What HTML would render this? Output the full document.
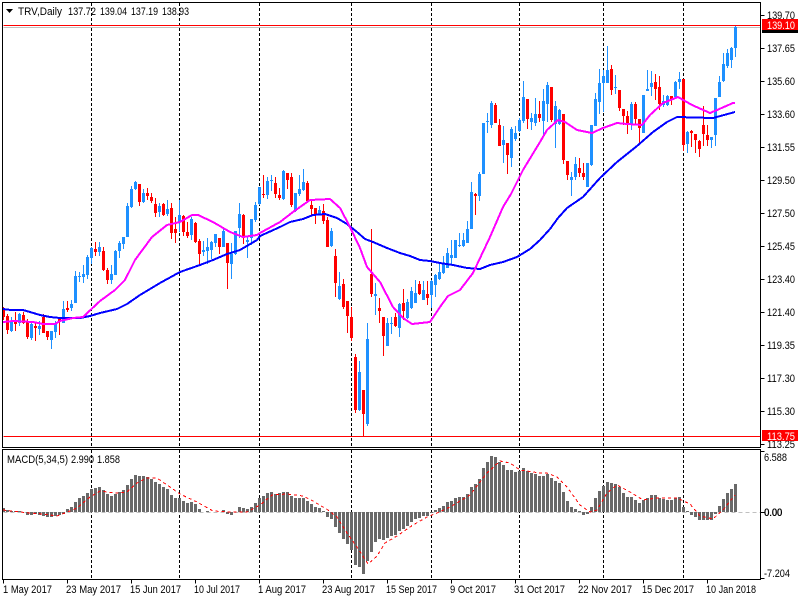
<!DOCTYPE html>
<html>
<head>
<meta charset="utf-8">
<title>TRV,Daily</title>
<style>
html,body{margin:0;padding:0;background:#fff;width:800px;height:600px;overflow:hidden}
svg{display:block}
text{font-family:"Liberation Sans",Arial,sans-serif;font-size:11px;fill:#000}
</style>
</head>
<body>
<svg width="800" height="600" viewBox="0 0 800 600" xmlns="http://www.w3.org/2000/svg">
<rect width="800" height="600" fill="#fff"/>

<g transform="translate(.5,0)" shape-rendering="crispEdges" fill="none">
<!-- vertical period separators -->
<path stroke="#000" stroke-dasharray="3,2" d="M91 3V447M179 3V447M259 3V447M351 3V447M431 3V447M519 3V447M603 3V447M683 3V447M91 450V579M179 450V579M259 450V579M351 450V579M431 450V579M519 450V579M603 450V579M683 450V579"/>
<!-- price lines -->
<path stroke="#c0c0c0" d="M3 27.5H760"/>
<path stroke="#ff0000" d="M3 25.5H760M3 436.5H760"/>

<!-- blue wicks -->
<path stroke="#1e90ff" stroke-width="1" d="M11 317V332M19 313V326M31 322V340M39 321V335M51 331V349M55 321V338M63 301V323M71 300V311M75 271V303M79 272V282M83 265V283M87 255V279M91 247V264M99 242V256M111 265V284M115 250V275M119 241V258M123 237V249M127 203V237M131 186V208M135 181V190M143 189V203M159 203V217M167 200V216M179 200V232M191 217V240M203 241V256M207 238V264M211 241V259M215 234V247M223 228V247M231 243V279M235 231V255M239 203V238M247 236V258M251 219V245M255 202V222M259 187V205M267 177V199M271 175V191M283 170V200M295 193V212M299 175V196M303 169V191M319 206V215M331 228V247M339 272V300M359 361V411M367 323V426M375 283V315M387 318V346M391 317V334M399 303V337M407 299V319M411 287V309M415 280V303M423 281V300M431 280V308M435 274V297M439 263V280M443 256V274M447 248V268M451 240V265M455 240V258M459 233V247M463 233V247M467 221V243M471 182V229M479 172V201M483 123V174M487 113V133M491 101V128M503 126V163M511 127V167M515 126V141M519 118V132M523 81V123M531 113V130M535 98V126M543 89V135M547 82V122M555 101V148M559 109V125M571 172V196M575 157V180M587 163V187M591 125V166M595 93V126M599 69V114M603 70V112M607 46V83M615 75V94M631 102V130M643 95V133M647 70V91M651 71V96M663 95V107M667 95V106M675 81V97M679 72V89M687 131V153M711 137V148M715 98V146M719 76V97M723 53V82M727 49V68M731 47V68M735 26V57"/>
<!-- blue bodies -->
<path stroke="#1e90ff" stroke-width="3" d="M11 322V331M19 314V323M31 324V338M39 326V329M51 331V340M55 324V332M63 309V323M71 304V308M75 276V303M79 276V277M83 274V277M87 257V275M91 248V258M99 247V252M111 274V280M115 251V275M119 243V251M123 237V244M127 206V237M131 189V207M135 182V189M143 193V202M159 206V212M167 209V214M179 215V222M191 219V235M203 250V252M207 247V251M211 242V250M215 234V243M223 231V247M231 254V264M235 231V254M239 214V228M247 240V242M251 219V238M255 205V220M259 187V204M267 181V195M271 180V181M283 171V199M295 193V211M299 189V194M303 182V190M319 210V214M331 231V246M339 286V299M359 372V410M367 339V424M375 294V296M387 323V346M391 323V324M399 304V328M407 302V318M411 291V308M415 293V303M423 290V300M431 281V295M435 275V285M439 272V279M443 264V273M447 253V268M451 255V258M455 240V258M459 245V246M463 240V246M467 229V243M471 192V229M479 174V196M483 123V174M487 121V122M491 103V125M503 140V145M511 129V158M515 133V139M519 120V131M523 97V121M531 118V122M535 114V123M543 101V121M547 85V104M555 106V124M559 110V124M571 177V180M575 164V177M587 163V187M591 125V165M595 99V126M599 83V102M603 76V83M607 70V83M615 87V88M631 104V125M643 95V133M647 89V91M651 83V87M663 101V105M667 96V105M675 82V97M679 79V82M687 132V144M711 137V140M715 98V135M719 82V97M723 64V81M727 53V66M731 48V60M735 27V48"/>
<!-- red wicks -->
<path stroke="#ff0000" stroke-width="1" d="M3 307V320M7 314V334M15 312V331M23 312V324M27 319V339M35 323V341M43 314V333M47 331V340M59 317V335M67 301V312M95 242V256M103 247V271M107 268V284M139 184V206M147 188V200M151 193V203M155 198V217M163 203V216M171 203V239M175 217V243M183 215V236M187 222V238M195 222V243M199 239V265M219 238V254M227 243V289M243 214V244M263 175V198M275 177V198M279 188V200M287 173V189M291 173V207M307 181V202M311 199V215M315 208V224M323 204V224M327 217V247M335 249V297M343 279V309M347 301V333M351 307V341M355 354V413M363 390V436M371 229V297M379 298V323M383 317V356M395 313V327M403 289V320M419 281V295M427 281V305M475 193V215M495 103V123M499 119V146M507 143V174M527 99V129M539 101V122M551 87V122M563 114V164M567 161V180M579 158V177M583 163V180M611 65V95M619 90V111M623 109V125M627 111V134M635 102V124M639 119V145M655 74V100M659 76V110M671 96V105M683 79V151M691 130V147M695 134V153M699 140V157M703 106V146M707 125V146"/>
<!-- red bodies -->
<path stroke="#ff0000" stroke-width="3" d="M3 309V317M7 316V330M15 321V324M23 315V323M27 321V337M35 326V328M43 317V333M47 331V337M59 319V322M67 308V310M95 249V252M103 251V270M107 270V280M139 184V202M147 193V196M151 197V201M155 204V213M163 204V215M171 208V233M175 229V233M183 216V232M187 232V236M195 223V242M199 241V254M219 238V247M227 243V263M243 215V238M263 194V195M275 183V194M279 195V198M287 173V180M291 177V205M307 183V201M311 205V209M315 208V214M323 211V221M327 220V247M335 256V283M343 284V307M347 301V316M351 317V338M355 357V410M363 390V414M371 274V294M379 308V311M383 317V336M395 317V326M403 303V311M419 284V294M427 294V298M475 194V196M495 105V123M499 125V146M507 143V155M527 99V119M539 114V118M551 87V120M563 114V160M567 161V175M579 168V173M583 173V177M611 69V90M619 90V108M623 109V116M627 116V125M635 104V119M639 119V128M655 82V89M659 87V104M671 96V99M683 79V145M691 131V133M695 134V140M699 141V149M703 125V134M707 135V140"/>
</g>

<!-- moving averages -->
<polyline fill="none" stroke="#0000ff" stroke-width="2" shape-rendering="crispEdges" points="3,309 11,310 23,310 30,312 40,315 50,317 60,318 80,318 90,316 100,313 117,309 127,304 140,295 160,283 180,272 200,265 213,260 227,254 240,250 257,240 260,236 280,227 290,222 303,219 313,215 325,214 337,218 347,224 357,232 365,239 373,242 387,248 400,253 410,256 420,260 430,261 440,263 453,265 467,268 480,269 490,265 503,262 517,257 530,249 540,240 550,229 558,218 567,208 583,197 600,178 617,162 637,146 653,132 667,122 677,117 713,118 735,112"/>
<polyline fill="none" stroke="#ff00ff" stroke-width="2" shape-rendering="crispEdges" points="3,322 13,321 33,322 43,324 55,324 60,321 73,318 83,317 100,301 115,290 125,280 135,260 152,237 167,225 180,222 192,215 198,215 213,222 230,232 243,237 257,235 260,233 280,222 293,212 310,200 330,199 340,208 350,227 360,248 367,267 380,282 393,307 403,318 412,324 430,322 440,307 448,296 460,290 473,273 490,237 503,207 511,194 523,170 540,142 547,130 558,120 565,122 577,130 592,133 603,128 617,123 627,124 642,125 650,115 663,103 678,97 692,105 710,113 717,110 733,103 735,103"/>

<g transform="translate(.5,0)" shape-rendering="crispEdges" fill="none">
<!-- MACD zero line -->
<path stroke="#c0c0c0" stroke-dasharray="4,3" d="M3 512.5H760"/>
<!-- MACD histogram -->
<path stroke="#696969" stroke-width="3" d="M3 512V508M7 512V510M11 512V511M15 512V511M19 512V511M27 512V515M31 512V515M35 512V514M39 512V515M43 512V516M47 512V517M51 512V517M55 512V516M59 512V515M63 512V514M67 512V509M71 512V507M75 512V502M79 512V498M83 512V496M87 512V493M91 512V489M95 512V488M99 512V487M103 512V490M107 512V494M111 512V496M115 512V494M119 512V492M123 512V490M127 512V485M131 512V479M135 512V475M139 512V476M143 512V476M147 512V477M151 512V479M155 512V482M159 512V484M163 512V487M167 512V489M171 512V495M175 512V498M179 512V498M183 512V501M187 512V503M191 512V502M195 512V504M199 512V509M207 512V511M223 512V510M227 512V514M231 512V515M239 512V507M243 512V508M247 512V509M251 512V507M255 512V503M259 512V498M263 512V496M267 512V493M271 512V492M275 512V494M279 512V493M283 512V492M287 512V492M291 512V496M295 512V498M299 512V498M303 512V498M307 512V501M311 512V504M315 512V507M319 512V508M323 512V511M327 512V517M331 512V519M335 512V527M339 512V533M343 512V539M347 512V544M351 512V550M355 512V565M359 512V567M363 512V574M367 512V561M371 512V552M375 512V542M379 512V539M383 512V540M387 512V538M391 512V536M395 512V535M399 512V531M403 512V529M407 512V526M411 512V522M415 512V519M419 512V518M423 512V516M427 512V516M431 512V513M435 512V510M439 512V508M443 512V506M447 512V502M451 512V501M455 512V498M459 512V497M463 512V497M467 512V494M471 512V487M475 512V484M479 512V479M483 512V468M487 512V462M491 512V456M495 512V457M499 512V462M503 512V465M507 512V470M511 512V470M515 512V472M519 512V471M523 512V468M527 512V471M531 512V473M535 512V474M539 512V476M543 512V476M547 512V474M551 512V478M555 512V481M559 512V483M563 512V492M567 512V501M571 512V507M575 512V509M579 512V511M583 512V515M587 512V514M591 512V507M595 512V498M599 512V491M603 512V486M607 512V482M611 512V483M615 512V484M619 512V487M623 512V493M627 512V497M631 512V497M635 512V500M639 512V503M643 512V500M647 512V498M651 512V495M655 512V495M659 512V498M663 512V499M667 512V500M671 512V500M675 512V498M679 512V497M683 512V507M687 512V511M691 512V515M695 512V517M699 512V520M703 512V520M707 512V520M711 512V520M715 512V514M719 512V506M723 512V499M727 512V493M731 512V489M735 512V484"/>
</g>
<!-- MACD signal -->
<polyline fill="none" stroke="#ff0000" stroke-width="1" stroke-dasharray="3,3" shape-rendering="crispEdges" points="3,510 20,512 30,513 43,514 57,516 65,513 77,508 90,497 100,491 115,493 127,492 137,483 147,478 157,478 170,487 180,494 197,502 213,511 230,512 247,512 260,505 272,495 287,494 303,496 313,501 328,510 337,517 347,533 357,547 368,564 377,556 385,543 397,536 413,525 427,517 437,513 450,507 470,495 487,473 500,461 510,463 520,470 540,473 547,473 557,477 567,487 580,505 590,512 597,510 607,493 617,485 630,492 643,500 657,498 677,498 690,504 700,516 713,519 723,510 735,495"/>

<!-- frames and ticks -->
<g transform="translate(.5,.5)" shape-rendering="crispEdges" fill="none" stroke="#000">
<path d="M2 2H760V447H2ZM2 449H760V579H2Z"/>
<path d="M760 15H764M760 48H764M760 81H764M760 114H764M760 147H764M760 180H764M760 213H764M760 246H764M760 279H764M760 312H764M760 345H764M760 378H764M760 411H764M760 444H764M760 451H764M760 512H764M760 578H764"/>
<path d="M3 579V583M67 579V583M131 579V583M195 579V583M259 579V583M323 579V583M387 579V583M451 579V583M515 579V583M579 579V583M643 579V583M707 579V583"/>
</g>

<!-- header -->
<path d="M6 9H13L9.5 13Z" fill="#000"/>
<text x="18" y="15" textLength="44" lengthAdjust="spacingAndGlyphs">TRV,Daily</text>
<text x="68" y="15" textLength="28" lengthAdjust="spacingAndGlyphs">137.72</text>
<text x="100" y="15" textLength="27" lengthAdjust="spacingAndGlyphs">139.04</text>
<text x="131" y="15" textLength="27" lengthAdjust="spacingAndGlyphs">137.19</text>
<text x="162" y="15" textLength="27" lengthAdjust="spacingAndGlyphs">138.93</text>
<text x="7" y="463" textLength="61" lengthAdjust="spacingAndGlyphs">MACD(5,34,5)</text>
<text x="71" y="463" textLength="23" lengthAdjust="spacingAndGlyphs">2.990</text>
<text x="97" y="463" textLength="23" lengthAdjust="spacingAndGlyphs">1.858</text>

<!-- price axis -->
<g>
<text x="767" y="19" textLength="28" lengthAdjust="spacingAndGlyphs">139.70</text>
<rect x="762" y="29" width="36" height="4" fill="#000"/>
<rect x="762" y="19" width="36" height="11" fill="#ff0000"/>
<text x="767" y="29" textLength="28" lengthAdjust="spacingAndGlyphs" style="fill:#fff">139.10</text>
<text x="767" y="52" textLength="28" lengthAdjust="spacingAndGlyphs">137.65</text>
<text x="767" y="85" textLength="28" lengthAdjust="spacingAndGlyphs">135.60</text>
<text x="767" y="118" textLength="28" lengthAdjust="spacingAndGlyphs">133.60</text>
<text x="767" y="151" textLength="28" lengthAdjust="spacingAndGlyphs">131.55</text>
<text x="767" y="184" textLength="28" lengthAdjust="spacingAndGlyphs">129.50</text>
<text x="767" y="217" textLength="28" lengthAdjust="spacingAndGlyphs">127.50</text>
<text x="767" y="250" textLength="28" lengthAdjust="spacingAndGlyphs">125.45</text>
<text x="767" y="283" textLength="28" lengthAdjust="spacingAndGlyphs">123.40</text>
<text x="767" y="316" textLength="28" lengthAdjust="spacingAndGlyphs">121.40</text>
<text x="767" y="349" textLength="28" lengthAdjust="spacingAndGlyphs">119.35</text>
<text x="767" y="382" textLength="28" lengthAdjust="spacingAndGlyphs">117.30</text>
<text x="767" y="415" textLength="28" lengthAdjust="spacingAndGlyphs">115.30</text>
<text x="767" y="448" textLength="28" lengthAdjust="spacingAndGlyphs">113.25</text>
<rect x="762" y="430" width="36" height="11" fill="#ff0000"/>
<text x="767" y="440" textLength="28" lengthAdjust="spacingAndGlyphs" style="fill:#fff">113.75</text>
<text x="764" y="461" textLength="23" lengthAdjust="spacingAndGlyphs">6.588</text>
<text x="764" y="516" textLength="18" lengthAdjust="spacingAndGlyphs">0.00</text>
<text x="764.4" y="516" textLength="18" lengthAdjust="spacingAndGlyphs">0.00</text>
<text x="764" y="577" textLength="26" lengthAdjust="spacingAndGlyphs">-7.204</text>
</g>

<!-- time axis -->
<g>
<text x="3" y="593" textLength="49" lengthAdjust="spacingAndGlyphs">1 May 2017</text>
<text x="66" y="593" textLength="55" lengthAdjust="spacingAndGlyphs">23 May 2017</text>
<text x="130" y="593" textLength="51" lengthAdjust="spacingAndGlyphs">15 Jun 2017</text>
<text x="194" y="593" textLength="46" lengthAdjust="spacingAndGlyphs">10 Jul 2017</text>
<text x="258" y="593" textLength="48" lengthAdjust="spacingAndGlyphs">1 Aug 2017</text>
<text x="322" y="593" textLength="53" lengthAdjust="spacingAndGlyphs">23 Aug 2017</text>
<text x="386" y="593" textLength="51" lengthAdjust="spacingAndGlyphs">15 Sep 2017</text>
<text x="450" y="593" textLength="46" lengthAdjust="spacingAndGlyphs">9 Oct 2017</text>
<text x="514" y="593" textLength="51" lengthAdjust="spacingAndGlyphs">31 Oct 2017</text>
<text x="578" y="593" textLength="54" lengthAdjust="spacingAndGlyphs">22 Nov 2017</text>
<text x="642" y="593" textLength="52" lengthAdjust="spacingAndGlyphs">15 Dec 2017</text>
<text x="706" y="593" textLength="50" lengthAdjust="spacingAndGlyphs">10 Jan 2018</text>
</g>
</svg>
</body>
</html>
